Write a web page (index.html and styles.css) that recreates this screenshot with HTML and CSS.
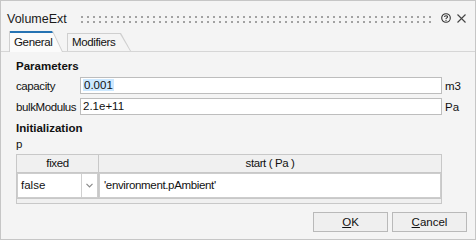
FILE: index.html
```html
<!DOCTYPE html>
<html lang="en">
<head>
  <meta charset="UTF-8" />
  <title>VolumeExt</title>
  <link rel="stylesheet" href="styles.css">
</head>
<body>
  <div class="window">
    <!-- Title bar -->
    <div class="titlebar">
      <span class="title">VolumeExt</span>
      <span class="grip"></span>
      <svg class="help" width="10" height="10" viewBox="0 0 10 10">
        <circle cx="5" cy="5" r="4.3" fill="none" stroke="#333" stroke-width="1.1"/>
        <path d="M3.5 4 C3.5 2.4 6.5 2.4 6.5 3.9 C6.5 4.9 5 4.9 5 6" fill="none" stroke="#333" stroke-width="1.1"/>
        <rect x="4.45" y="6.8" width="1.1" height="1.1" fill="#333"/>
      </svg>
      <svg class="close" width="9" height="9" viewBox="0 0 9 9">
        <path d="M0.5 0.5 L8.5 8.5 M8.5 0.5 L0.5 8.5" stroke="#444" stroke-width="1.1"/>
      </svg>
    </div>

    <!-- Tabs -->
    <div class="tabs">
      <div class="tab active"><span>General</span></div>
      <div class="tab"><span>Modifiers</span></div>
    </div>

    <!-- General page -->
    <div class="panel">
      <div class="section">Parameters</div>
      <div class="param">
        <span class="label">capacity</span>
        <div class="field"><span class="sel">0.001</span></div>
        <span class="unit">m3</span>
      </div>
      <div class="param">
        <span class="label">bulkModulus</span>
        <div class="field">2.1e+11</div>
        <span class="unit">Pa</span>
      </div>

      <div class="section init">Initialization</div>
      <div class="var">p</div>
      <div class="grid">
        <div class="row head">
          <div class="c1">fixed</div>
          <div class="c2">start ( Pa )</div>
        </div>
        <div class="row data">
          <div class="c1">
            <div class="combo">
              <span class="combo-text">false</span>
              <span class="combo-arrow">
                <svg width="7" height="5" viewBox="0 0 7 5"><path d="M0.5 0.8 L3.5 3.8 L6.5 0.8" fill="none" stroke="#8a8a8a" stroke-width="1.2"/></svg>
              </span>
            </div>
          </div>
          <div class="c2">
            <div class="cell-input">'environment.pAmbient'</div>
          </div>
        </div>
        <div class="foot"></div>
      </div>
    </div>

    <!-- Buttons -->
    <div class="buttons">
      <button><u>O</u>K</button>
      <button><u>C</u>ancel</button>
    </div>
  </div>
</body>
</html>
```

FILE: styles.css
```css
body {
  margin: 0;
  padding: 0;
  font-family: "Liberation Sans", Arial, sans-serif;
  font-size: 11.5px;
  color: #111;
  background: #f4f4f4;
}

.window {
  width: 476px;
  height: 240px;
  box-sizing: border-box;
  border: 1px solid #c6c6c6;
  background: #f4f4f4;
  display: flex;
  flex-direction: column;
}

/* Title bar */
.titlebar {
  height: 28px;
  box-sizing: border-box;
  padding: 8px 9px 0 6px;
  display: flex;
  align-items: center;
}
.title {
  font-size: 12.5px;
  color: #1a1a1a;
}
.grip {
  flex: 1;
  height: 7px;
  margin: 0 10px 0 14px;
  background:
    linear-gradient(90deg, #a2a2a2 2px, transparent 2px) 0 0 / 6px 2px repeat-x,
    linear-gradient(90deg, #a2a2a2 2px, transparent 2px) 0 5px / 6px 2px repeat-x;
}
.help {
  margin-right: 6px;
  margin-top: -2px;
}
.close {
  margin-top: -1px;
}

/* Tabs */
.tabs {
  height: 22px;
  padding-left: 8px;
  border-bottom: 1px solid #d6d6d6;
  display: flex;
  align-items: flex-end;
}
.tab {
  height: 18px;
  width: 64px;
  margin-left: 4px;
  box-sizing: border-box;
  padding: 1px 0 0 1px;
  background: #cfcfcf;
  clip-path: polygon(0 0, calc(100% - 10px) 0, 100% 100%, 0 100%);
  display: flex;
}
.tab span {
  flex: 1;
  padding-left: 4px;
  background: #f4f4f4;
  clip-path: polygon(0 0, calc(100% - 11px) 0, calc(100% - 1px) 100%, 0 100%);
  line-height: 17px;
  letter-spacing: -0.35px;
}
.tab.active {
  height: 21px;
  width: 54px;
  margin-left: 0;
  margin-bottom: -1px;
  padding-top: 0;
}
.tab.active span {
  background: #fbfbfb;
  border-top: 2px solid #2673b3;
  line-height: 18px;
}

/* Panel */
.panel {
  padding: 7px 0 0 15px;
}
.section {
  font-weight: bold;
  font-size: 11.5px;
  line-height: 14px;
  color: #111;
}
.section.init {
  margin-top: 6px;
}
.param {
  display: flex;
  align-items: center;
  margin-top: 4px;
}
.label {
  width: 64px;
  letter-spacing: -0.4px;
}
.field {
  width: 362px;
  height: 17px;
  box-sizing: border-box;
  border: 1px solid #bdbdbd;
  background: #fff;
  padding-left: 2px;
  line-height: 15px;
}
.sel {
  background: #cce8ff;
  padding: 0 1px;
}
.unit {
  margin-left: 3px;
}
.var {
  margin-top: 3px;
  line-height: 13px;
}

/* Table */
.grid {
  width: 426px;
  margin-top: 3px;
  box-sizing: border-box;
  border: 1px solid #c8c8c8;
  background: #f0f0f0;
}
.row {
  display: flex;
}
.c1 {
  width: 82px;
  box-sizing: border-box;
  border-right: 1px solid #c8c8c8;
}
.c2 {
  flex: 1;
}
.head {
  height: 18px;
  box-sizing: border-box;
  border-bottom: 1px solid #c8c8c8;
  line-height: 17px;
  text-align: center;
  letter-spacing: -0.4px;
}
.data {
  height: 25px;
}
.combo {
  height: 100%;
  box-sizing: border-box;
  border: 1px solid #cdcdcd;
  background: #fff;
  display: flex;
}
.combo-text {
  flex: 1;
  padding-left: 3px;
  line-height: 23px;
}
.combo-arrow {
  width: 15px;
  border-left: 1px solid #d0d0d0;
  display: flex;
  justify-content: center;
  align-items: center;
}
.cell-input {
  height: 100%;
  box-sizing: border-box;
  border: 1px solid #cdcdcd;
  background: #fff;
  padding-left: 4px;
  line-height: 23px;
  letter-spacing: -0.35px;
}
.foot {
  height: 4px;
  border-top: 1px solid #c8c8c8;
}

/* Buttons */
.buttons {
  margin-top: auto;
  padding: 0 8px 7px 0;
  display: flex;
  justify-content: flex-end;
  gap: 4px;
}
.buttons button {
  width: 75px;
  height: 20px;
  padding: 0;
  border: 1px solid #b9b9b9;
  background: #efefef;
  font-family: "Liberation Sans", Arial, sans-serif;
  font-size: 11.5px;
  color: #111;
}
```
